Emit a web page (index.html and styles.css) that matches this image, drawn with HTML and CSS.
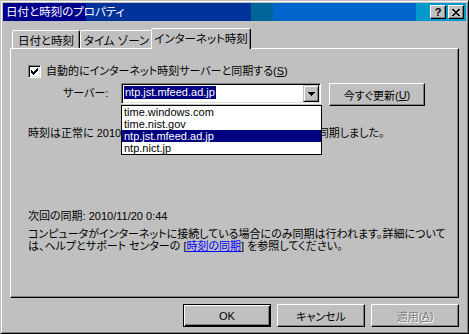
FILE: index.html
```html
<!DOCTYPE html>
<html lang="ja">
<head>
<meta charset="utf-8">
<title>日付と時刻のプロパティ</title>
<link rel="stylesheet" href="styles.css">
</head>
<body>
<div class="window">
  <div class="titlebar">
    <span class="title">日付と時刻のプロパティ</span>
    <div class="caption-btns">
      <div class="cbtn cbtn-help">?</div>
      <div class="cbtn cbtn-close">
        <svg width="8" height="7" viewBox="0 0 8 7" shape-rendering="crispEdges"><path fill="#000" d="M0 0h2v1h-2zM6 0h2v1h-2zM1 1h2v1h-2zM5 1h2v1h-2zM2 2h4v1h-4zM3 3h2v1h-2zM2 4h4v1h-4zM1 5h2v1h-2zM5 5h2v1h-2zM0 6h2v1h-2zM6 6h2v1h-2z"/></svg>
      </div>
    </div>
  </div>
  <div class="content">
    <div class="tabs">
      <div class="tab tab-date">日付と時刻</div>
      <div class="tab tab-zone">タイム ゾーン</div>
      <div class="tab tab-net tab-active">インターネット時刻</div>
    </div>
    <div class="panel">
      <div class="check-row">
        <span class="checkbox">
          <svg width="7" height="7" viewBox="0 0 7 7" shape-rendering="crispEdges"><path fill="#000" d="M0 2h1v3h-1zM1 3h1v3h-1zM2 4h1v3h-1zM3 3h1v3h-1zM4 2h1v3h-1zM5 1h1v3h-1zM6 0h1v3h-1z"/></svg>
        </span>
        <span class="check-label">自動的にインターネット時刻サーバーと同期する(<u>S</u>)</span>
      </div>
      <div class="server-row">
        <span class="server-label">サーバー:</span>
        <div class="combo">
          <span class="combo-sel">ntp.jst.mfeed.ad.jp</span>
          <div class="drop-btn">
            <svg width="7" height="4" viewBox="0 0 7 4" shape-rendering="crispEdges"><path fill="#000" d="M0 0h7v1h-7zM1 1h5v1h-5zM2 2h3v1h-3zM3 3h1v1h-1z"/></svg>
          </div>
          <ul class="drop-list">
            <li>time.windows.com</li>
            <li>time.nist.gov</li>
            <li class="is-selected">ntp.jst.mfeed.ad.jp</li>
            <li>ntp.nict.jp</li>
          </ul>
        </div>
        <div class="btn btn-update">今すぐ更新(<u>U</u>)</div>
      </div>
      <p class="status">時刻は正常に 2010/11/20 <span class="status-mid">0:44 に ntp.jst.mfeed.ad.jp と </span>同期しました。</p>
      <p class="next">次回の同期: 2010/11/20 0:44</p>
      <p class="note">コンピュータがインターネットに接続している場合にのみ同期は行われます。詳細について<br>は、ヘルプとサポート センターの [<a class="link" href="#">時刻の同期</a>] を参照してください。</p>
    </div>
    <div class="buttons">
      <div class="btn btn-default">OK</div>
      <div class="btn">キャンセル</div>
      <div class="btn btn-disabled">適用(<u>A</u>)</div>
    </div>
  </div>
</div>
</body>
</html>
```

FILE: styles.css
```css
* { box-sizing: border-box; }
html, body { margin: 0; padding: 0; }
body {
  width: 469px;
  height: 334px;
  overflow: hidden;
  background: #c0c0c0;
  font-family: "Liberation Sans", "Noto Sans CJK JP", sans-serif;
  font-size: 11px;
  color: #000;
  font-feature-settings: "palt";
}
.window {
  width: 469px;
  height: 334px;
  background: #c0c0c0;
  border: 1px solid;
  border-color: #c0c0c0 #000 #000 #c0c0c0;
  box-shadow: inset 1px 1px #fff, inset -1px -1px #808080;
  padding: 2px;
  display: flex;
  flex-direction: column;
}
.titlebar {
  flex: none;
  height: 18px;
  display: flex;
  justify-content: space-between;
  padding: 0 2px 0 3px;
  color: #fff;
  background: linear-gradient(to right,
    #00008c 0, #00008c 83px,
    #003399 83px, #003399 248px,
    #006699 248px, #006699 270px,
    #0066cc 270px, #0066cc 413px,
    #0099cc 413px, #0099cc 100%);
}
.title { line-height: 18px; white-space: nowrap; font-size: 11.5px; }
.caption-btns { display: flex; gap: 2px; margin-top: 2px; }
.cbtn {
  width: 16px;
  height: 14px;
  background: #c0c0c0;
  border: 1px solid;
  border-color: #fff #000 #000 #fff;
  box-shadow: inset -1px -1px #808080;
  display: flex;
  align-items: center;
  justify-content: center;
}
.cbtn-help {
  color: #000;
  font-family: "Liberation Sans", sans-serif;
  font-weight: bold;
  font-size: 11px;
  line-height: 12px;
}
.content {
  flex: 1;
  padding: 7px 7px 0 7px;
  display: flex;
  flex-direction: column;
}
.tabs {
  display: flex;
  align-items: flex-end;
  height: 20px;
  padding-left: 2px;
}
.tab {
  height: 18px;
  border: 1px solid;
  border-bottom: none;
  border-color: #fff #000 transparent #fff;
  border-radius: 2px 2px 0 0;
  box-shadow: inset -1px 0 #808080;
  background: #c0c0c0;
  display: flex;
  align-items: center;
  justify-content: center;
  white-space: nowrap;
  font-size: 11.5px;
}
.tab-date { width: 68px; }
.tab-zone { width: 73px; }
.tab-net { width: 100px; }
.tab-active {
  height: 21px;
  margin: 0 -2px -1px -2px;
  padding-bottom: 2px;
  position: relative;
  z-index: 1;
}
.panel {
  height: 250px;
  border: 1px solid;
  border-color: #fff #000 #000 #fff;
  box-shadow: inset -1px -1px #808080;
  padding: 16px 0 0 17px;
  position: relative;
}
.check-row { display: flex; align-items: center; height: 13px; }
.checkbox {
  width: 13px;
  height: 13px;
  background: #fff;
  border: 1px solid;
  border-color: #808080 #fff #fff #808080;
  box-shadow: inset 1px 1px #000, inset -1px -1px #dfdfdf;
  display: flex;
  align-items: center;
  justify-content: center;
  margin-right: 5px;
}
.check-label { line-height: 13px; white-space: nowrap; }
.server-row {
  display: flex;
  align-items: flex-start;
  margin-top: 5px;
  padding-left: 35px;
}
.server-label { width: 58px; line-height: 21px; white-space: nowrap; }
.combo {
  width: 200px;
  height: 21px;
  margin-right: 8px;
  background: #fff;
  border: 1px solid;
  border-color: #808080 #fff #fff #808080;
  box-shadow: inset 1px 1px #000, inset -1px -1px #dfdfdf;
  padding: 1px;
  display: flex;
  justify-content: space-between;
  position: relative;
}
.combo-sel {
  margin: 1px 0 0 1px;
  height: 13px;
  line-height: 13px;
  padding: 0 1px;
  background: #000080;
  color: #fff;
  white-space: nowrap;
}
.drop-btn {
  width: 16px;
  height: 17px;
  background: #c0c0c0;
  border: 1px solid;
  border-color: #c0c0c0 #000 #000 #c0c0c0;
  box-shadow: inset 1px 1px #fff, inset -1px -1px #808080;
  display: flex;
  align-items: center;
  justify-content: center;
}
.drop-list {
  position: absolute;
  top: 21px;
  left: -1px;
  width: 201px;
  margin: 0;
  padding: 0;
  list-style: none;
  background: #fff;
  border: 1px solid #000;
  z-index: 2;
}
.drop-list li {
  height: 12px;
  line-height: 12px;
  padding-left: 2px;
  white-space: nowrap;
}
.drop-list li.is-selected { background: #000080; color: #fff; }
.btn {
  width: 88px;
  height: 23px;
  background: #c0c0c0;
  border: 1px solid;
  border-color: #fff #000 #000 #fff;
  box-shadow: inset -1px -1px #808080;
  display: flex;
  align-items: center;
  justify-content: center;
  white-space: nowrap;
}
.btn-update { width: 96px; }
.btn-default {
  border-color: #000;
  box-shadow: inset 1px 1px #fff, inset -1px -1px #000, inset -2px -2px #808080;
}
.btn-disabled { color: #808080; text-shadow: 1px 1px #fff; }
.status, .next, .note { margin: 0; line-height: 12px; white-space: nowrap; }
.status { margin-top: 21px; }
.status-mid { word-spacing: 5px; }
.next { margin-top: 71px; }
.note { margin-top: 6px; }
.link { color: #0000ff; text-decoration: underline; }
.buttons {
  display: flex;
  justify-content: flex-end;
  gap: 6px;
  margin-top: 6px;
}
```
